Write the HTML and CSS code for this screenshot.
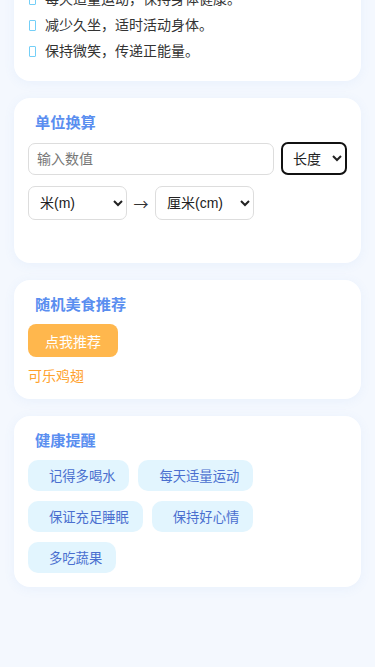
FILE: index.html
```html
<!DOCTYPE html>
<html lang="zh-CN">
<head>
<meta charset="utf-8">
<meta name="viewport" content="width=device-width, initial-scale=1">
<title>健康小助手</title>
<link rel="stylesheet" href="styles.css">
</head>
<body>
<main class="page">
  <section class="card card-tips">
    <ul class="tips">
      <li><span class="bullet"><i></i></span>每天适量运动，保持身体健康。</li>
      <li><span class="bullet"><i></i></span>减少久坐，适时活动身体。</li>
      <li><span class="bullet"><i></i></span>保持微笑，传递正能量。</li>
    </ul>
  </section>

  <section class="card">
    <h2 class="card-title">单位换算</h2>
    <div class="row">
      <input class="num-input" type="text" placeholder="输入数值">
      <select class="sel sel-type">
        <option>长度</option>
        <option>重量</option>
      </select>
    </div>
    <div class="row row-units">
      <select class="sel sel-unit">
        <option>米(m)</option>
        <option>厘米(cm)</option>
      </select>
      <span class="arrow">→</span>
      <select class="sel sel-unit">
        <option>厘米(cm)</option>
        <option>米(m)</option>
      </select>
    </div>
    <div class="convert-result"></div>
  </section>

  <section class="card">
    <h2 class="card-title">随机美食推荐</h2>
    <button class="btn-food" type="button">点我推荐</button>
    <div class="food-result">可乐鸡翅</div>
  </section>

  <section class="card">
    <h2 class="card-title">健康提醒</h2>
    <div class="tags">
      <span class="tag">记得多喝水</span>
      <span class="tag">每天适量运动</span>
      <span class="tag">保证充足睡眠</span>
      <span class="tag">保持好心情</span>
      <span class="tag">多吃蔬果</span>
    </div>
  </section>
</main>
</body>
</html>
```

FILE: styles.css
```css
* { box-sizing: border-box; }

html, body {
  margin: 0;
  padding: 0;
  background: #f4f8fe;
}

body {
  font-family: "Liberation Sans", "Noto Sans CJK SC", sans-serif;
  color: #333;
  font-size: 14px;
}

.page {
  padding: 0 14px 40px;
}

.card {
  background: #fff;
  border-radius: 16px;
  padding: 16px 14px 14px;
  margin-bottom: 17px;
  box-shadow: 0 2px 12px rgba(90, 140, 230, 0.07);
}

.card-tips {
  margin-top: -27px;
}

.tips {
  list-style: none;
  margin: 0;
  padding: 0;
}

.tips li {
  display: flex;
  align-items: center;
  line-height: 20px;
  height: 20px;
  margin-bottom: 6px;
  font-size: 14px;
  color: #333;
}

.bullet {
  width: 17px;
  display: flex;
  align-items: center;
  padding-left: 1px;
}

.bullet i {
  display: block;
  width: 7px;
  height: 11px;
  border: 1.5px solid #74cff7;
  border-radius: 1px;
}

.card-title {
  margin: 0 0 10px;
  padding-left: 7px;
  font-size: 15.2px;
  line-height: 18px;
  font-weight: bold;
  color: #5a8ef0;
}

.row {
  display: flex;
  align-items: center;
  gap: 7px;
}

.num-input {
  flex: 1;
  min-width: 0;
  height: 32px;
  margin: 1px 0 0;
  border: 1px solid #ddd;
  border-radius: 7px;
  padding: 0 8px;
  font: 14px "Liberation Sans", "Noto Sans CJK SC", sans-serif;
  color: #333;
  background: #fff;
}

.num-input::placeholder {
  color: #777;
}

.sel {
  font: 14px "Liberation Sans", "Noto Sans CJK SC", sans-serif;
  color: #222;
  background: #fff;
  border: 1px solid #ddd;
  border-radius: 7px;
  padding: 0 4px 0 7px;
}

.sel-type {
  width: 66px;
  height: 33px;
  border: 2px solid #111;
  padding-left: 6px;
}

.row-units {
  margin-top: 11px;
  gap: 6px;
}

.sel-unit {
  width: 99px;
  height: 34px;
}

.arrow {
  font-family: "Noto Sans CJK SC", sans-serif;
  font-size: 15px;
  color: #333;
  width: 16px;
  text-align: center;
}

.convert-result {
  height: 29px;
}

.btn-food {
  display: block;
  height: 33px;
  padding: 0 17px;
  border: none;
  border-radius: 8px;
  background: #ffb74d;
  color: #fff;
  font: 14px "Liberation Sans", "Noto Sans CJK SC", sans-serif;
  margin-top: 0;
}

.food-result {
  margin-top: 10px;
  line-height: 18px;
  color: #ffa22e;
  font-size: 14px;
}

.tags {
  display: flex;
  flex-wrap: wrap;
  gap: 10px 9px;
}

.tag {
  display: inline-flex;
  align-items: center;
  height: 31px;
  padding: 0 14px 0 21px;
  border-radius: 10px;
  background: #e2f5fe;
  color: #4a6fcf;
  font-size: 13.3px;
}
```
